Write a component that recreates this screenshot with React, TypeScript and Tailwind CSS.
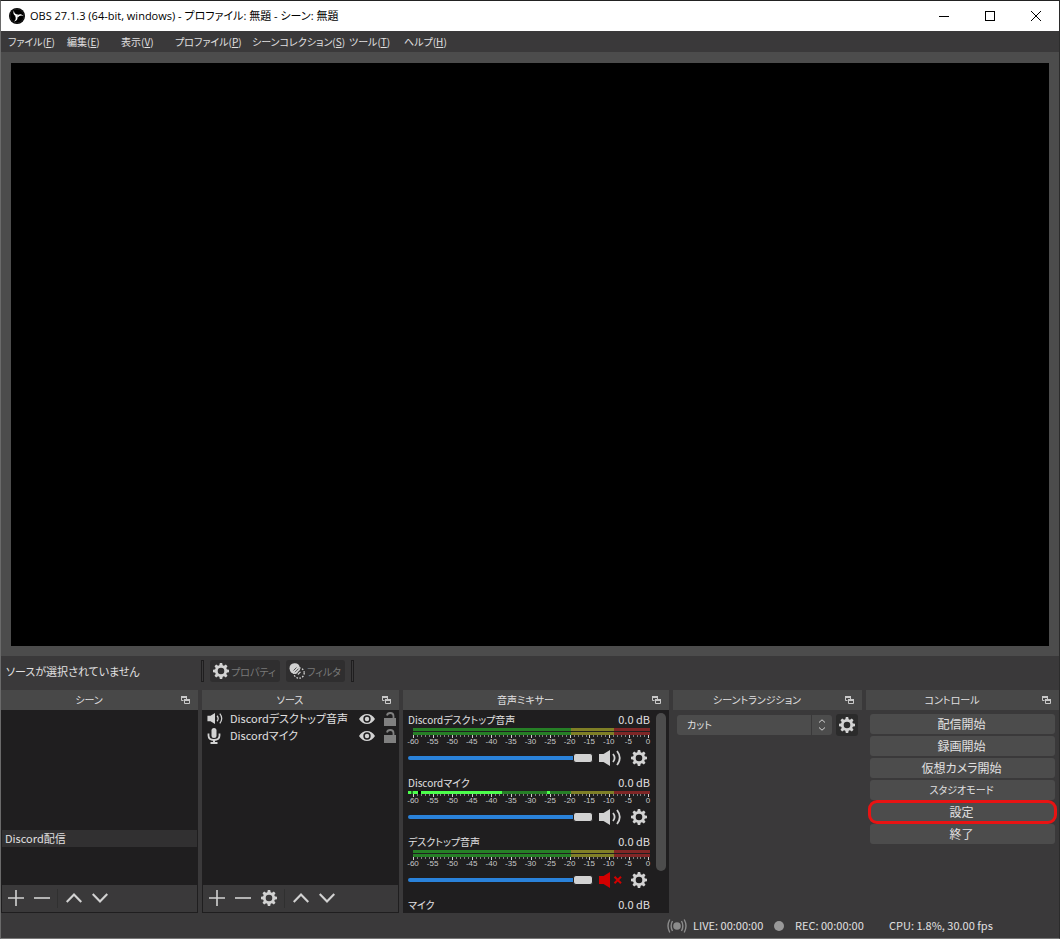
import React from 'react';

type IconProps = { className?: string };
type Segment = { size: number; color: string };
type ChannelProps = { name: string; meters: Segment[][]; muted: boolean };

const menus = [
  { label: 'ファイル', accel: 'F', width: 'w-[44px]' },
  { label: '編集', accel: 'E', width: 'w-[39px]' },
  { label: '表示', accel: 'V', width: 'w-[39px]' },
  { label: 'プロファイル', accel: 'P', width: 'w-[62px]' },
  { label: 'シーンコレクション', accel: 'S', width: 'w-[82px]' },
  { label: 'ツール', accel: 'T', width: 'w-[40px]' },
  { label: 'ヘルプ', accel: 'H', width: 'w-[46px]' },
];

const stereoSegments: Segment[] = [
  { size: 5, color: 'transparent' },
  { size: 158, color: '#267f26' },
  { size: 43, color: '#7f7f26' },
  { size: 36, color: '#7f2626' },
];

const micSegments: Segment[] = [
  { size: 3, color: '#4cff4c' },
  { size: 2, color: '#267f26' },
  { size: 5, color: '#4cff4c' },
  { size: 3, color: '#000000' },
  { size: 81, color: '#4cff4c' },
  { size: 45, color: '#267f26' },
  { size: 3, color: '#4cff4c' },
  { size: 21, color: '#267f26' },
  { size: 43, color: '#7f7f26' },
  { size: 36, color: '#7f2626' },
];

const channels: ChannelProps[] = [
  { name: 'Discordデスクトップ音声', meters: [stereoSegments, stereoSegments], muted: false },
  { name: 'Discordマイク', meters: [micSegments], muted: false },
  { name: 'デスクトップ音声', meters: [stereoSegments, stereoSegments], muted: true },
];

const scale = [-60, -55, -50, -45, -40, -35, -30, -25, -20, -15, -10, -5, 0];
const ticks = Array.from({ length: 61 }, (_, i) => i);
const teeth = [0, 45, 90, 135, 180, 225, 270, 315];
const blades = [0, 120, 240];

const controls = ['配信開始', '録画開始', '仮想カメラ開始', 'スタジオモード', '設定', '終了'];

const ObsIcon = ({ className }: IconProps) => (
  <svg viewBox="0 0 16 16" className={className}>
    <circle cx="8" cy="8" r="8" fill="#000" />
    <circle cx="8" cy="8" r="6.9" fill="none" stroke="#3a3a3a" strokeWidth="0.5" />
    {blades.map((angle) => (
      <path
        key={angle}
        d="M8.2 8.2 C5.4 8 3.4 5.6 4.9 2.4 C5 4.9 6.4 6.2 9 6.5 Z"
        fill="#fff"
        transform={`rotate(${angle} 8 8)`}
      />
    ))}
  </svg>
);

const GearIcon = ({ className }: IconProps) => (
  <svg viewBox="0 0 16 16" className={className}>
    <circle cx="8" cy="8" r="4.7" fill="none" stroke="currentColor" strokeWidth="2.8" />
    {teeth.map((angle) => (
      <path key={angle} d="M6.2 3 L6.8 0 H9.2 L9.8 3 Z" fill="currentColor" transform={`rotate(${angle} 8 8)`} />
    ))}
  </svg>
);

const FilterIcon = ({ className }: IconProps) => (
  <svg viewBox="0 0 16 16" className={className}>
    <circle cx="10" cy="10" r="5.2" fill="none" stroke="currentColor" strokeWidth="1.3" strokeDasharray="1.6 1.4" />
    <path d="M0.5 5.5 A5.2 5.2 0 0 1 10.8 4.5 L11 7 L7 11 Q1 11 0.5 5.5 Z" fill="currentColor" />
    <path d="M4.5 7.5 L7.5 4.5 M6 9.2 L9.5 5.7 M8 10.8 L11.5 7.3" stroke="#2f2e2f" strokeWidth="0.8" />
    <path d="M7 10 L8.7 8.3 M8.8 11.5 L11.5 8.8" stroke="currentColor" strokeWidth="1.2" />
  </svg>
);

const SpeakerIcon = ({ className }: IconProps) => (
  <svg viewBox="0 0 22 16" className={className} fill="none" stroke="currentColor" strokeWidth="1.8">
    <path d="M0 4 H4.5 L11 0 V16 L4.5 12 H0 Z" fill="currentColor" stroke="none" />
    <path d="M14 4 Q17.2 8 14 12" />
    <path d="M18 1 Q23.5 8 18 15" />
  </svg>
);

const MutedIcon = ({ className }: IconProps) => (
  <svg viewBox="0 0 23 16" className={className}>
    <path d="M0 4 H4.5 L11 0 V16 L4.5 12 H0 Z" fill="currentColor" />
    <path d="M15.5 4.8 L22 11.3 M22 4.8 L15.5 11.3" stroke="currentColor" strokeWidth="2" />
  </svg>
);

const MicIcon = ({ className }: IconProps) => (
  <svg viewBox="0 0 14 16" className={className} fill="none" stroke="currentColor">
    <rect x="4.5" y="0" width="5" height="10" rx="2.5" fill="currentColor" stroke="none" />
    <path d="M1.5 5.5 V7.5 Q1.5 12 7 12 Q12.5 12 12.5 7.5 V5.5" strokeWidth="1.8" />
    <path d="M7 12 V15 M3.5 15 H10.5" strokeWidth="2" />
  </svg>
);

const EyeIcon = ({ className }: IconProps) => (
  <svg viewBox="0 0 16 12" className={className}>
    <path
      fillRule="evenodd"
      fill="currentColor"
      d="M0 6 Q3.2 1 8 1 Q12.8 1 16 6 Q12.8 11 8 11 Q3.2 11 0 6 Z M8 2.3 A3.7 3.7 0 1 0 8 9.7 A3.7 3.7 0 1 0 8 2.3 Z"
    />
    <circle cx="8" cy="6" r="2.2" fill="currentColor" />
  </svg>
);

const UnlockIcon = ({ className }: IconProps) => (
  <svg viewBox="0 0 12 14" className={className}>
    <rect x="0" y="6" width="12" height="8" fill="currentColor" />
    <path d="M3 3.5 Q3.4 1 6.2 1 Q9.5 1 9.5 4 V7" fill="none" stroke="currentColor" strokeWidth="1.8" />
  </svg>
);

const FloatIcon = ({ className }: IconProps) => (
  <svg viewBox="0 0 9 8" className={className} fill="none" stroke="currentColor">
    <path d="M0 1 H6" strokeWidth="2" />
    <path d="M0.5 1 V4.5 H2.5 M5.5 1 V3" />
    <path d="M3 4 H9" strokeWidth="2" />
    <path d="M3.5 4 V7.5 H8.5 V4" />
  </svg>
);

const PlusIcon = ({ className }: IconProps) => (
  <svg viewBox="0 0 16 16" className={className}>
    <path d="M8 0 V16 M0 8 H16" stroke="currentColor" strokeWidth="1.6" />
  </svg>
);

const MinusIcon = ({ className }: IconProps) => (
  <svg viewBox="0 0 16 16" className={className}>
    <path d="M0 8 H16" stroke="currentColor" strokeWidth="1.6" />
  </svg>
);

const UpIcon = ({ className }: IconProps) => (
  <svg viewBox="0 0 16 16" className={className}>
    <path d="M0.7 12 L8 4.5 L15.3 12" fill="none" stroke="currentColor" strokeWidth="2.2" />
  </svg>
);

const DownIcon = ({ className }: IconProps) => (
  <svg viewBox="0 0 16 16" className={className}>
    <path d="M0.7 4 L8 11.5 L15.3 4" fill="none" stroke="currentColor" strokeWidth="2.2" />
  </svg>
);

const LiveIcon = ({ className }: IconProps) => (
  <svg viewBox="0 0 20 14" className={className} fill="none" stroke="currentColor" strokeWidth="1.4">
    <circle cx="10" cy="7" r="3.8" fill="currentColor" stroke="none" />
    <path d="M5.5 2 Q2.8 7 5.5 12 M14.5 2 Q17.2 7 14.5 12" />
    <path d="M2.8 0.5 Q-0.8 7 2.8 13.5 M17.2 0.5 Q20.8 7 17.2 13.5" />
  </svg>
);

const Dock = ({ title, children }: { title: string; children: React.ReactNode }) => (
  <section className="flex min-w-0 flex-col">
    <header className="flex h-5 shrink-0 items-center bg-[#484848] pr-2">
      <h2 className="flex-1 pr-1 text-center text-[10px] leading-5">{title}</h2>
      <button type="button" aria-label={`${title} フロート`} className="text-[#c8c8c8]">
        <FloatIcon className="h-2 w-[9px]" />
      </button>
    </header>
    {children}
  </section>
);

const ListToolbar = ({ withGear }: { withGear?: boolean }) => (
  <div className="flex h-[27px] items-center gap-[10px] bg-[#3a393a] px-[6px] pb-px text-[#d2d2d2]">
    <button type="button" aria-label="追加"><PlusIcon className="size-4" /></button>
    <button type="button" aria-label="削除"><MinusIcon className="size-4" /></button>
    {withGear && <button type="button" aria-label="プロパティ"><GearIcon className="size-4" /></button>}
    <div className="-ml-[3px] -mr-[2px] h-[19px] w-px bg-[#303030]" />
    <button type="button" aria-label="上へ"><UpIcon className="size-4" /></button>
    <button type="button" aria-label="下へ"><DownIcon className="size-4" /></button>
  </div>
);

const SourceRow = ({ name, icon }: { name: string; icon: React.ReactNode }) => (
  <li className="flex h-[17px] items-center pl-1 pr-[2px] text-[#d2d2d2]">
    <span className="flex w-[23px] shrink-0">{icon}</span>
    <span className="flex-1 whitespace-nowrap text-[11px] text-[#e1e0e1]">{name}</span>
    <button type="button" aria-label={`${name} 表示`}><EyeIcon className="mr-[9px] h-3 w-4" /></button>
    <button type="button" aria-label={`${name} ロック`} className="text-[#808080]">
      <UnlockIcon className="h-[14px] w-3" />
    </button>
  </li>
);

const ChannelTitle = ({ name }: { name: string }) => (
  <div className="flex h-[17px] items-center justify-between text-[10px]">
    <span>{name}</span>
    <span className="text-[11px]">0.0 dB</span>
  </div>
);

const Channel = ({ name, meters, muted }: ChannelProps) => (
  <div className="flex flex-col pb-1">
    <ChannelTitle name={name} />
    <div className="flex flex-col gap-px">
      {meters.map((segments, i) => (
        <div key={i} className="flex h-[3px]">
          {segments.map((segment, j) => (
            <span key={j} style={{ flexGrow: segment.size, backgroundColor: segment.color }} />
          ))}
        </div>
      ))}
    </div>
    <div className="flex h-[3px] justify-between pl-[5px]">
      {ticks.map((tick) => (
        <span key={tick} className={tick % 5 === 0 ? 'h-[3px] w-px bg-[#d0d0d0]' : 'h-[2px] w-px bg-[#808080]'} />
      ))}
    </div>
    <div className="flex h-2 justify-between pl-[5px] pr-[2px] font-['Liberation_Sans'] text-[8px] leading-2 text-[#c8c8c8]">
      {scale.map((value) => (
        <span key={value} className="flex w-0 justify-center">{value}</span>
      ))}
    </div>
    <div className="flex h-6 items-center">
      <input
        type="range"
        aria-label={`${name} 音量`}
        defaultValue={100}
        className="h-6 min-w-0 flex-1 appearance-none bg-transparent [&::-webkit-slider-runnable-track]:h-1 [&::-webkit-slider-runnable-track]:rounded-full [&::-webkit-slider-runnable-track]:bg-[#2a82da] [&::-webkit-slider-thumb]:-mt-[3px] [&::-webkit-slider-thumb]:h-[10px] [&::-webkit-slider-thumb]:w-5 [&::-webkit-slider-thumb]:appearance-none [&::-webkit-slider-thumb]:rounded-[3px] [&::-webkit-slider-thumb]:border [&::-webkit-slider-thumb]:border-[#1f1e1f] [&::-webkit-slider-thumb]:bg-[#d2d2d2]"
      />
      <button type="button" aria-label={`${name} ミュート`} className="ml-[6px] w-6 shrink-0">
        {muted ? <MutedIcon className="h-4 w-[23px] text-[#d20000]" /> : <SpeakerIcon className="h-4 w-[22px] text-[#d2d2d2]" />}
      </button>
      <button type="button" aria-label={`${name} 設定`} className="ml-2 mr-[3px] shrink-0 text-[#d2d2d2]">
        <GearIcon className="size-4" />
      </button>
    </div>
  </div>
);

const App = () => {
  return (
    <div className="flex min-h-screen flex-col border border-b-[#777] border-l-[#6a6a6a] border-r-[#2b2b2b] border-t-[#222] bg-[#3a393a] font-['Noto_Sans_CJK_JP',sans-serif] text-[12px] text-[#e1e0e1] [font-feature-settings:'palt']">
      <div className="flex h-[30px] shrink-0 items-center bg-white pl-2 text-black">
        <ObsIcon className="size-4" />
        <h1 className="ml-[5px] flex-1 font-['Open_Sans','Noto_Sans_CJK_JP',sans-serif] text-[11px]">
          OBS 27.1.3 (64-bit, windows) - プロファイル: 無題 - シーン: 無題
        </h1>
        <button type="button" aria-label="最小化" className="flex w-[46px] justify-center">
          <svg viewBox="0 0 10 10" className="size-[10px]"><path d="M0 5.5 H10" stroke="currentColor" /></svg>
        </button>
        <button type="button" aria-label="最大化" className="flex w-[46px] justify-center">
          <svg viewBox="0 0 10 10" className="size-[10px]"><rect x="0.5" y="0.5" width="9" height="9" fill="none" stroke="currentColor" /></svg>
        </button>
        <button type="button" aria-label="閉じる" className="flex w-[46px] justify-center">
          <svg viewBox="0 0 10 10" className="size-[10px]"><path d="M0 0 L10 10 M10 0 L0 10" stroke="currentColor" /></svg>
        </button>
      </div>

      <nav className="flex h-[21px] shrink-0 items-center gap-[15px] pl-[7px] text-[10px]">
        {menus.map((menu) => (
          <button key={menu.accel} type="button" className={`whitespace-nowrap text-left ${menu.width}`}>
            {menu.label}(<span className="underline">{menu.accel}</span>)
          </button>
        ))}
      </nav>

      <main className="flex flex-1 flex-col bg-[#4c4c4c] px-[10px] pb-[10px] pt-[11px]">
        <div className="min-h-60 flex-1 bg-black" />
      </main>

      <div className="flex h-[34px] shrink-0 items-center pb-1 text-[10px]">
        <span className="w-[200px] shrink-0 pl-[5px] text-[11px]">ソースが選択されていません</span>
        <div className="h-[22px] w-[3px] border border-[#1f1e1f]" />
        <button type="button" className="ml-[6px] flex h-[22px] w-[70px] items-center gap-[2px] whitespace-nowrap rounded-[3px] bg-[#2f2e2f] pl-[3px] text-[#7a7a7a]">
          <GearIcon className="size-4 shrink-0 text-[#d2d2d2]" />
          プロパティ
        </button>
        <button type="button" className="ml-[6px] flex h-[22px] w-[59px] items-center gap-[2px] whitespace-nowrap rounded-[3px] bg-[#2f2e2f] pl-[3px] text-[#7a7a7a]">
          <FilterIcon className="size-4 shrink-0 text-[#d2d2d2]" />
          フィルタ
        </button>
        <div className="ml-[6px] h-[22px] w-[3px] border border-[#1f1e1f]" />
      </div>

      <div className="grid shrink-0 grid-cols-[197fr_197fr_266fr_189fr_193fr] gap-1">
        <Dock title="シーン">
          <div className="border border-t-0 border-[#1f1e1f]">
            <ul className="h-[175px] bg-[#1f1e1f] pt-[120px]">
              <li className="h-[17px] bg-[#313031] pl-[3px] text-[11px] leading-[17px]">Discord配信</li>
            </ul>
            <ListToolbar />
          </div>
        </Dock>

        <Dock title="ソース">
          <div className="border border-t-0 border-[#1f1e1f]">
            <ul className="h-[175px] bg-[#1f1e1f]">
              <SourceRow name="Discordデスクトップ音声" icon={<SpeakerIcon className="h-[11px] w-4" />} />
              <SourceRow name="Discordマイク" icon={<MicIcon className="h-4 w-[14px]" />} />
            </ul>
            <ListToolbar withGear />
          </div>
        </Dock>

        <Dock title="音声ミキサー">
          <div className="flex h-[203px] bg-[#1f1e1f] pl-[5px] pr-[3px] pt-px">
            <div className="min-w-0 flex-1">
              {channels.map((channel) => (
                <Channel key={channel.name} {...channel} />
              ))}
              <ChannelTitle name="マイク" />
            </div>
            <div className="ml-[6px] mt-[2px] h-[158px] w-[10px] rounded-full bg-[#4c4c4c]" />
          </div>
        </Dock>

        <Dock title="シーントランジション">
          <div className="flex items-center gap-1 pl-1 pr-1 pt-1">
            <div className="flex h-5 flex-1 gap-px">
              <select aria-label="シーントランジション" className="min-w-0 flex-1 appearance-none rounded-l-[3px] bg-[#4c4c4c] pl-[10px] text-[10px] leading-5">
                <option>カット</option>
              </select>
              <span className="flex w-5 items-center justify-center rounded-r-[3px] bg-[#4c4c4c] text-[#d2d2d2]">
                <svg viewBox="0 0 8 12" className="h-3 w-2" fill="none" stroke="currentColor">
                  <path d="M1 3.5 L4 0.8 L7 3.5 M1 8.5 L4 11.2 L7 8.5" />
                </svg>
              </span>
            </div>
            <button type="button" aria-label="トランジションのプロパティ" className="flex size-[22px] items-center justify-center rounded-[3px] bg-[#2b2b2b] text-[#d2d2d2]">
              <GearIcon className="size-4" />
            </button>
          </div>
        </Dock>

        <Dock title="コントロール">
          <div className="flex flex-col gap-[2px] px-1 pt-1">
            {controls.map((label) => (
              <button
                key={label}
                type="button"
                className={`relative h-5 rounded-[3px] bg-[#4c4c4c] pr-[2px] leading-5 ${label === 'スタジオモード' ? 'text-[10px]' : 'text-[12px]'}`}
              >
                {label}
                {label === '設定' && <span className="absolute -inset-[2px] rounded-[9px] border-[3px] border-[#e81313]" />}
              </button>
            ))}
          </div>
        </Dock>
      </div>

      <footer className="flex h-[25px] shrink-0 items-center justify-end pr-[68px] text-[11px]">
        <LiveIcon className="mr-[6px] h-[14px] w-5 text-[#8c8c8c]" />
        <span className="w-[81px]">LIVE: 00:00:00</span>
        <span className="mr-[11px] size-[10px] rounded-full bg-[#999]" />
        <span className="w-[94px]">REC: 00:00:00</span>
        <span className="w-[102px] whitespace-nowrap">CPU: 1.8%, 30.00 fps</span>
      </footer>
    </div>
  );
};

export default App;
